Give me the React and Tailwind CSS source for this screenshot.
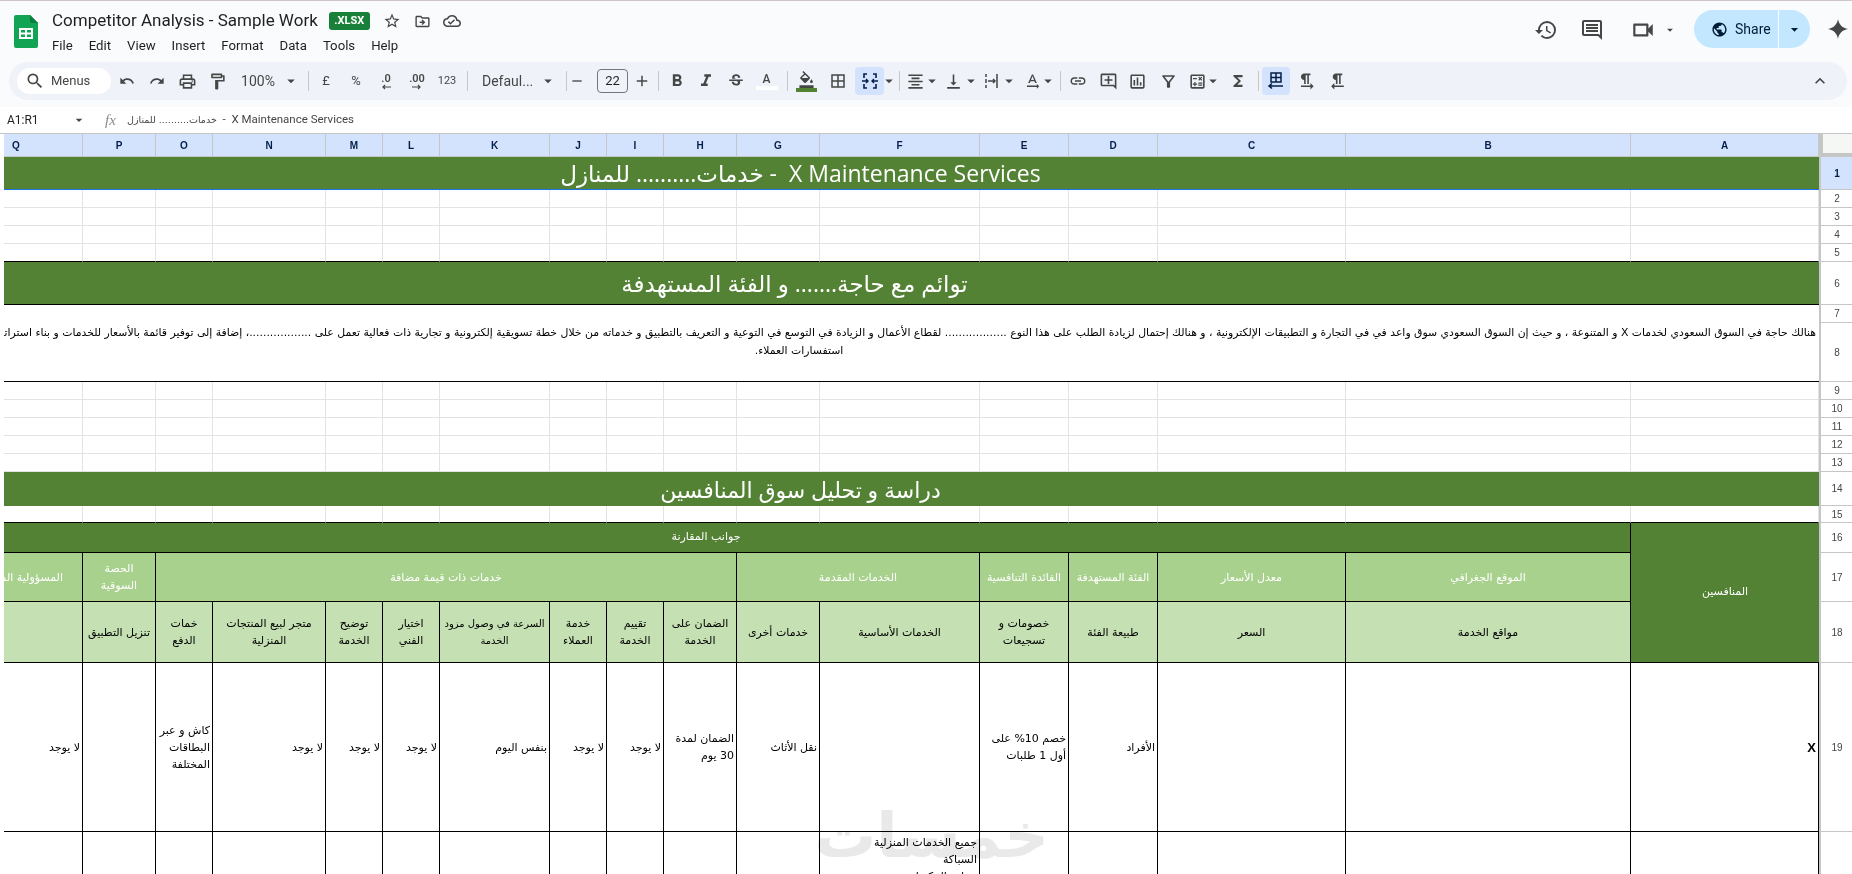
import {
  MdOutlineHistory, MdOutlineComment, MdOutlineVideocam, MdArrowDropDown, MdPublic, MdStarBorder,
  MdOutlineDriveFileMove, MdOutlineCloudDone, MdSearch, MdUndo, MdRedo, MdOutlinePrint, MdOutlineFormatPaint,
  MdAdd, MdRemove, MdFormatBold, MdFormatItalic, MdStrikethroughS, MdOutlineFormatColorFill, MdBorderAll,
  MdFormatAlignCenter, MdVerticalAlignBottom, MdTextRotationNone, MdLink, MdOutlineAddComment,
  MdOutlineInsertChart, MdOutlineFilterAlt, MdOutlineCalculate, MdFunctions, MdFormatTextdirectionLToR,
  MdFormatTextdirectionRToL, MdKeyboardArrowUp,
} from 'react-icons/md'

const AR = "font-['DejaVu_Sans',sans-serif]"

const Tool = ({ className = '', children }) => (
  <div className={`h-[28px] shrink-0 flex items-center justify-center text-[#444746] ${className}`}>{children}</div>
)

const Drop = ({ className = 'w-[10px]' }) => (
  <Tool className={className}>
    <MdArrowDropDown className="shrink-0" size={18} />
  </Tool>
)

const Sep = ({ className = '' }) => <div className={`w-px h-[20px] shrink-0 bg-[#c7c7c7] ${className}`} />

const SheetsLogo = () => (
  <svg width="24" height="33" viewBox="0 0 24 33" className="shrink-0">
    <path d="M2 0h14l8 8v23a2 2 0 0 1-2 2H2a2 2 0 0 1-2-2V2a2 2 0 0 1 2-2z" fill="#12a455" />
    <path d="M16 0l8 8h-6a2 2 0 0 1-2-2z" fill="#0b7d3e" />
    <path d="M5 13h14v11H5zM7 15v2.500h4V15zm6 0v2.500h4V15zM7 19.500V22h4v-2.500zm6 0V22h4v-2.500z" fill="#fff" fillRule="evenodd" />
  </svg>
)

const MergeIcon = () => (
  <svg width="18" height="18" viewBox="0 0 18 18" fill="none" stroke="#041e49" strokeWidth="1.600">
    <path d="M6 2H3v4M12 2h3v4M3 12v4h3M15 12v4h-3" />
    <path d="M1 9h6M5 7l2 2-2 2M17 9h-6M13 7l-2 2 2 2" strokeWidth="1.400" />
  </svg>
)

const OverflowIcon = () => (
  <svg width="18" height="18" viewBox="0 0 18 18" fill="none" stroke="#444746" strokeWidth="1.500">
    <path d="M3 2v3M3 7v4M3 13v3M14 2v14M5 9h7M10 7l2 2-2 2" />
  </svg>
)

const TableRtlIcon = () => (
  <svg width="20" height="20" viewBox="0 0 20 20" fill="none" stroke="#041e49" strokeWidth="1.500">
    <path d="M5 2h10v9H5zM10 2v9M5 6.500h10M3 15h14M6 12.500L3 15l3 2.500" />
  </svg>
)

const Toolbar = () => (
  <div className="flex items-center h-[38px] ml-[9px] mr-[5px] pl-[8px] rounded-[19px] bg-[#eff3f9]">
    <div className="w-[94px] h-[26px] shrink-0 rounded-full bg-white flex items-center pl-[8px] text-[#444746] text-[13px]">
      <MdSearch size={20} />
      <span className="ml-[6px]">Menus</span>
    </div>
    <Tool className="w-[30px] ml-[1px]"><MdUndo size={16} /></Tool>
    <Tool className="w-[30px]"><MdRedo size={16} /></Tool>
    <Tool className="w-[30px]"><MdOutlinePrint size={19} /></Tool>
    <Tool className="w-[30px]"><MdOutlineFormatPaint size={19} /></Tool>
    <Tool className="w-[52px] text-[14px]">100%</Tool>
    <Drop className="w-[14px]" />
    <Sep className="ml-[10px] mr-[2px]" />
    <Tool className="w-[30px] text-[13px]">£</Tool>
    <Tool className="w-[30px] text-[13px]">%</Tool>
    <Tool className="w-[30px] flex-col text-[11px] font-semibold leading-[11px]">
      .0
      <svg width="12" height="6" viewBox="0 0 12 6" fill="none" stroke="#444746" strokeWidth="1.200"><path d="M11 3H3M5 1L3 3l2 2" /></svg>
    </Tool>
    <Tool className="w-[32px] flex-col text-[11px] font-semibold leading-[11px]">
      .00
      <svg width="12" height="6" viewBox="0 0 12 6" fill="none" stroke="#444746" strokeWidth="1.200"><path d="M1 3h8M7 1l2 2-2 2" /></svg>
    </Tool>
    <Tool className="w-[28px] text-[11px]">123</Tool>
    <Sep className="ml-[6px]" />
    <Tool className="w-[73px] pl-[14px] !justify-start text-[14px]">Defaul...</Tool>
    <Drop className="w-[14px]" />
    <Sep className="ml-[11px]" />
    <Tool className="w-[19px]"><MdRemove size={16} /></Tool>
    <div className="w-[31px] h-[24px] shrink-0 ml-[11px] rounded-[4px] border border-[#747775] flex items-center justify-center text-[13px] text-[#1f1f1f]">22</div>
    <Tool className="w-[28px]"><MdAdd size={18} /></Tool>
    <Sep className="ml-[2px] mr-[3px]" />
    <Tool className="w-[29px]"><MdFormatBold size={20} /></Tool>
    <Tool className="w-[29px]"><MdFormatItalic size={20} /></Tool>
    <Tool className="w-[31px]"><MdStrikethroughS size={18} /></Tool>
    <Tool className="w-[31px] flex-col">
      <span className="text-[12px] leading-[14px] font-medium">A</span>
      <span className="w-[22px] h-[4px] bg-white" />
    </Tool>
    <Sep className="ml-[5px]" />
    <Tool className="w-[28px] ml-[4px] flex-col">
      <MdOutlineFormatColorFill size={17} />
      <span className="w-[21px] h-[4px] bg-[#548235]" />
    </Tool>
    <Tool className="w-[28px] ml-[4px]"><MdBorderAll size={18} /></Tool>
    <Tool className="w-[29px] ml-[3px] rounded-[4px] bg-[#d3e3fd]"><MergeIcon /></Tool>
    <Drop />
    <Sep className="ml-[5px] mr-[2px]" />
    <Tool className="w-[26px]"><MdFormatAlignCenter size={19} /></Tool>
    <Drop className="w-[8px]" />
    <Tool className="w-[26px] ml-[4px]"><MdVerticalAlignBottom size={19} /></Tool>
    <Drop />
    <Tool className="w-[26px] ml-[3px]"><OverflowIcon /></Tool>
    <Drop className="w-[8px]" />
    <Tool className="w-[26px] ml-[6px]"><MdTextRotationNone size={19} /></Tool>
    <Drop className="w-[6px]" />
    <Sep className="ml-[9px] mr-[3px]" />
    <Tool className="w-[28px]"><MdLink size={18} /></Tool>
    <Tool className="w-[28px] ml-[2px]"><MdOutlineAddComment size={19} /></Tool>
    <Tool className="w-[28px] ml-[1px]"><MdOutlineInsertChart size={19} /></Tool>
    <Tool className="w-[28px] ml-[3px]"><MdOutlineFilterAlt size={19} /></Tool>
    <Tool className="w-[26px] ml-[2px]"><MdOutlineCalculate size={19} /></Tool>
    <Drop className="w-[6px]" />
    <Tool className="w-[26px] ml-[9px]"><MdFunctions size={18} /></Tool>
    <Sep className="ml-[7px] mr-[3px]" />
    <Tool className="w-[28px] rounded-[4px] bg-[#d3e3fd]"><TableRtlIcon /></Tool>
    <Tool className="w-[28px] ml-[2px]"><MdFormatTextdirectionLToR size={19} /></Tool>
    <Tool className="w-[28px] ml-[3px]"><MdFormatTextdirectionRToL size={19} /></Tool>
    <Tool className="w-[28px] ml-auto mr-[13px]"><MdKeyboardArrowUp size={20} /></Tool>
  </div>
)

const TopBar = () => (
  <div className="flex h-[62px] shrink-0 border-t border-[#cfc7c7] pl-[14px]">
    <div className="mt-[14px]"><SheetsLogo /></div>
    <div className="ml-[14px] mt-[6px]">
      <div className="flex items-center h-[28px] text-[#1f1f1f]">
        <span className="text-[17px] font-['Roboto',sans-serif]">Competitor Analysis - Sample Work</span>
        <span className="ml-[11px] h-[18px] w-[41px] rounded-[3px] bg-[#188038] text-white text-[11px] font-bold flex items-center justify-center">.XLSX</span>
        <MdStarBorder className="ml-[13px] text-[#444746]" size={18} />
        <MdOutlineDriveFileMove className="ml-[13px] text-[#444746]" size={17} />
        <MdOutlineCloudDone className="ml-[12px] text-[#444746]" size={18} />
      </div>
      <div className="flex items-center gap-[16px] h-[20px] mt-[1px] text-[13.2px] text-[#1f1f1f]">
        <span>File</span>
        <span>Edit</span>
        <span>View</span>
        <span>Insert</span>
        <span>Format</span>
        <span>Data</span>
        <span>Tools</span>
        <span>Help</span>
      </div>
    </div>
    <div className="ml-auto flex items-start pt-[9px] pr-[6px]">
      <Tool className="w-[40px] h-[40px]"><MdOutlineHistory size={24} /></Tool>
      <Tool className="w-[40px] h-[40px] ml-[6px]"><MdOutlineComment size={24} /></Tool>
      <Tool className="w-[40px] h-[40px] ml-[11px]"><MdOutlineVideocam size={26} /></Tool>
      <Tool className="w-[14px] h-[40px]"><MdArrowDropDown size={16} /></Tool>
      <div className="ml-[17px] w-[116px] h-[38px] rounded-full bg-[#c2e7ff] flex items-center text-[#001d35] text-[14px]">
        <MdPublic className="ml-[17px]" size={17} />
        <span className="ml-[7px]">Share</span>
        <span className="ml-auto w-px h-full bg-white" />
        <MdArrowDropDown className="mx-[7px]" size={17} />
      </div>
      <svg className="ml-[18px] mr-[-2px] mt-[9px]" width="20" height="20" viewBox="0 0 20 20"><path d="M10 0c.8 5.500 4.500 9.200 10 10-5.500.8-9.200 4.500-10 10-.8-5.500-4.500-9.200-10-10C5.500 9.200 9.200 5.500 10 0z" fill="#444746" /></svg>
    </div>
  </div>
)

const FormulaBar = () => (
  <div className="flex items-center h-[26px] mt-[7px] shrink-0 bg-white text-[12px] text-[#1f1f1f]">
    <span className="ml-[7px] w-[64px]">A1:R1</span>
    <MdArrowDropDown className="text-[#444746]" size={16} />
    <span className="ml-[18px] w-[22px] italic font-['Liberation_Serif',serif] text-[15px] text-[#8a8a8a]">fx</span>
    <span dir="rtl" className="text-[11.500px] text-[#444746] whitespace-pre">
      X Maintenance Services  -  <span className={`text-[9.500px] ${AR}`}>خدمات.......... للمنازل</span>
    </span>
  </div>
)

const LETTERS = ['Q', 'P', 'O', 'N', 'M', 'L', 'K', 'J', 'I', 'H', 'G', 'F', 'E', 'D', 'C', 'B', 'A']

const ColHead = ({ label, className = 'justify-center' }) => (
  <div className={`bg-[#d3e3fd] border-r border-b border-[#c4c7c5] flex items-center text-[10px] font-bold text-[#041e49] font-['Liberation_Sans',sans-serif] ${className}`}>{label}</div>
)

const RowHead = ({ n, active }) => (
  <div className={`border-l-2 border-b flex items-center justify-center text-[10px] font-['Liberation_Sans',sans-serif] border-[#c4c7c5] ${active ? 'bg-[#d3e3fd] text-[#041e49] font-bold' : 'bg-white text-[#444746]'}`}>{n}</div>
)

// a row of plain empty cells with the light gridlines
const EmptyRow = ({ n }) => (
  <>
    {LETTERS.map((l) => (
      <div key={l} className={`border-r border-b border-[#e2e3e3] ${n === 5 || n === 15 ? 'border-b-black' : ''}`} />
    ))}
    <RowHead n={n} />
  </>
)

const Banner = ({ className = 'text-[22px]', children }) => (
  <div className={`col-span-17 bg-[#548235] flex items-center justify-center pr-[222px] text-white whitespace-pre font-['Open_Sans','DejaVu_Sans',sans-serif] ${className}`}>
    <span dir="rtl">{children}</span>
  </div>
)

const Group = ({ className = '', children }) => (
  <div dir="rtl" className={`bg-[#a9d18e] border-r border-b border-black flex items-center justify-center text-center text-white text-[11px] leading-[17px] overflow-hidden ${AR} ${className}`}>{children}</div>
)

const Sub = ({ children }) => (
  <div dir="rtl" className={`bg-[#c5e0b3] border-r border-b border-black flex items-center justify-center text-center text-black text-[11px] leading-[17px] px-[1px] ${AR}`}>{children}</div>
)

const Data = ({ className = '', children }) => (
  <div dir="rtl" className={`bg-white border-r border-b border-black flex items-center justify-start text-right text-black text-[11px] leading-[17px] px-[2px] ${AR} ${className}`}>{children}</div>
)

const Sheet = () => (
  <div className="relative flex-1 min-h-0 overflow-hidden pl-[4px] bg-white border-t border-[#c4c7c5]">
    <div className="grid grid-cols-[79px_73px_57px_113px_57px_57px_110px_57px_57px_73px_83px_160px_89px_89px_188px_285px_188px_34px] grid-rows-[23px_33px_18px_18px_18px_18px_43px_18px_59px_18px_18px_18px_18px_18px_34px_17px_30px_49px_61px_169px_200px]">
      {LETTERS.map((l) => <ColHead key={l} label={l} className={l === 'Q' ? 'justify-start pl-[8px]' : 'justify-center'} />)}
      <div className="bg-[#c4c7c5] pl-[4px] pb-[4px]"><div className="h-full bg-[#f5f7f5]" /></div>

      <Banner className="text-[23px] border-b border-[#1a73e8]">X Maintenance Services  - خدمات.......... للمنازل</Banner>
      <RowHead n={1} active />
      <EmptyRow n={2} />
      <EmptyRow n={3} />
      <EmptyRow n={4} />
      <EmptyRow n={5} />

      <Banner className="text-[23px] !pr-[234px] border-b border-black">توائم مع حاجة....... و الفئة المستهدفة</Banner>
      <RowHead n={6} />

      <div dir="rtl" className={`col-span-17 row-span-2 border-b border-black overflow-hidden text-[10.850px] leading-[18px] pr-[3px] pb-[2px] text-black flex flex-col justify-center ${AR}`}>
        <div className="whitespace-nowrap">هنالك حاجة في السوق السعودي لخدمات X و المتنوعة ، و حيث إن السوق السعودي سوق واعد في في التجارة و التطبيقات الإلكترونية ، و هنالك إحتمال لزيادة الطلب على هذا النوع .................. لقطاع الأعمال و الزيادة في التوسع في التوعية و التعريف بالتطبيق و خدماته من خلال خطة تسويقية إلكترونية و تجارية ذات فعالية تعمل على ..................، إضافة إلى توفير قائمة بالأسعار للخدمات و بناء استراتيجية</div>
        <div className="text-center pr-[222px]">استفسارات العملاء.</div>
      </div>
      <RowHead n={7} />
      <RowHead n={8} />
      <EmptyRow n={9} />
      <EmptyRow n={10} />
      <EmptyRow n={11} />
      <EmptyRow n={12} />
      <EmptyRow n={13} />

      <Banner>دراسة و تحليل سوق المنافسين</Banner>
      <RowHead n={14} />
      <EmptyRow n={15} />

      <div dir="rtl" className={`col-span-16 bg-[#548235] border-r border-b border-black flex items-center justify-center pr-[222px] text-white text-[11px] ${AR}`}>جوانب المقارنة</div>
      <div dir="rtl" className={`row-span-3 bg-[#548235] border-b border-black flex items-center justify-center text-white text-[11px] ${AR}`}>المنافسين</div>
      <RowHead n={16} />

      <Group className="whitespace-nowrap !justify-start pr-[19px]">المسؤولية المجتمعية</Group>
      <Group className="px-[10px]">الحصة السوقية</Group>
      <Group className="col-span-8">خدمات ذات قيمة مضافة</Group>
      <Group className="col-span-2">الخدمات المقدمة</Group>
      <Group className="whitespace-nowrap">الفائدة التنافسية</Group>
      <Group className="whitespace-nowrap">الفئة المستهدفة</Group>
      <Group>معدل الأسعار</Group>
      <Group>الموقع الجغرافي</Group>
      <RowHead n={17} />

      <Sub />
      <Sub>تنزيل التطبيق</Sub>
      <Sub>خمات<br />الدفع</Sub>
      <Sub>متجر لبيع المنتجات المنزلية</Sub>
      <Sub>توضيح الخدمة</Sub>
      <Sub>اختيار<br />الفني</Sub>
      <Sub><span className="whitespace-nowrap text-[10px]">السرعة في وصول مزود<br />الخدمة</span></Sub>
      <Sub>خدمة العملاء</Sub>
      <Sub>تقييم الخدمة</Sub>
      <Sub>الضمان على الخدمة</Sub>
      <Sub>خدمات أخرى</Sub>
      <Sub>الخدمات الأساسية</Sub>
      <Sub>خصومات و تسجيعات</Sub>
      <Sub>طبيعة الفئة</Sub>
      <Sub>السعر</Sub>
      <Sub>مواقع الخدمة</Sub>
      <RowHead n={18} />

      <Data>لا يوجد</Data>
      <Data />
      <Data>كاش و عبر البطاقات المختلفة</Data>
      <Data>لا يوجد</Data>
      <Data>لا يوجد</Data>
      <Data>لا يوجد</Data>
      <Data>بنفس اليوم</Data>
      <Data>لا يوجد</Data>
      <Data>لا يوجد</Data>
      <Data>الضمان لمدة 30 يوم</Data>
      <Data>نقل الأثاث</Data>
      <Data />
      <Data>خصم 10% على أول 1 طلبات</Data>
      <Data>الأفراد</Data>
      <Data />
      <Data />
      <Data className="font-bold font-['Liberation_Sans',sans-serif] text-[13px]">X</Data>
      <RowHead n={19} />

      {LETTERS.map((l) =>
        l === 'F' ? (
          <Data key={l} className="!items-start pt-[2px]">
            <div>
              جميع الخدمات المنزلية
              <br />
              السباكة
              <br />
              تصليح المكيفات
            </div>
          </Data>
        ) : (
          <Data key={l} />
        )
      )}
      <RowHead n={20} />
    </div>
    {/* site watermark over the sheet */}
    <div dir="rtl" className={`absolute left-[814px] top-[662px] text-[62px] leading-[80px] font-bold text-[#e9e9e9] mix-blend-multiply pointer-events-none ${AR}`}>خمسات</div>
  </div>
)

export default function App() {
  return (
    <div className="h-screen flex flex-col overflow-hidden bg-[#f9fbfd] font-['Roboto',sans-serif]">
      <TopBar />
      <Toolbar />
      <FormulaBar />
      <Sheet />
    </div>
  )
}
